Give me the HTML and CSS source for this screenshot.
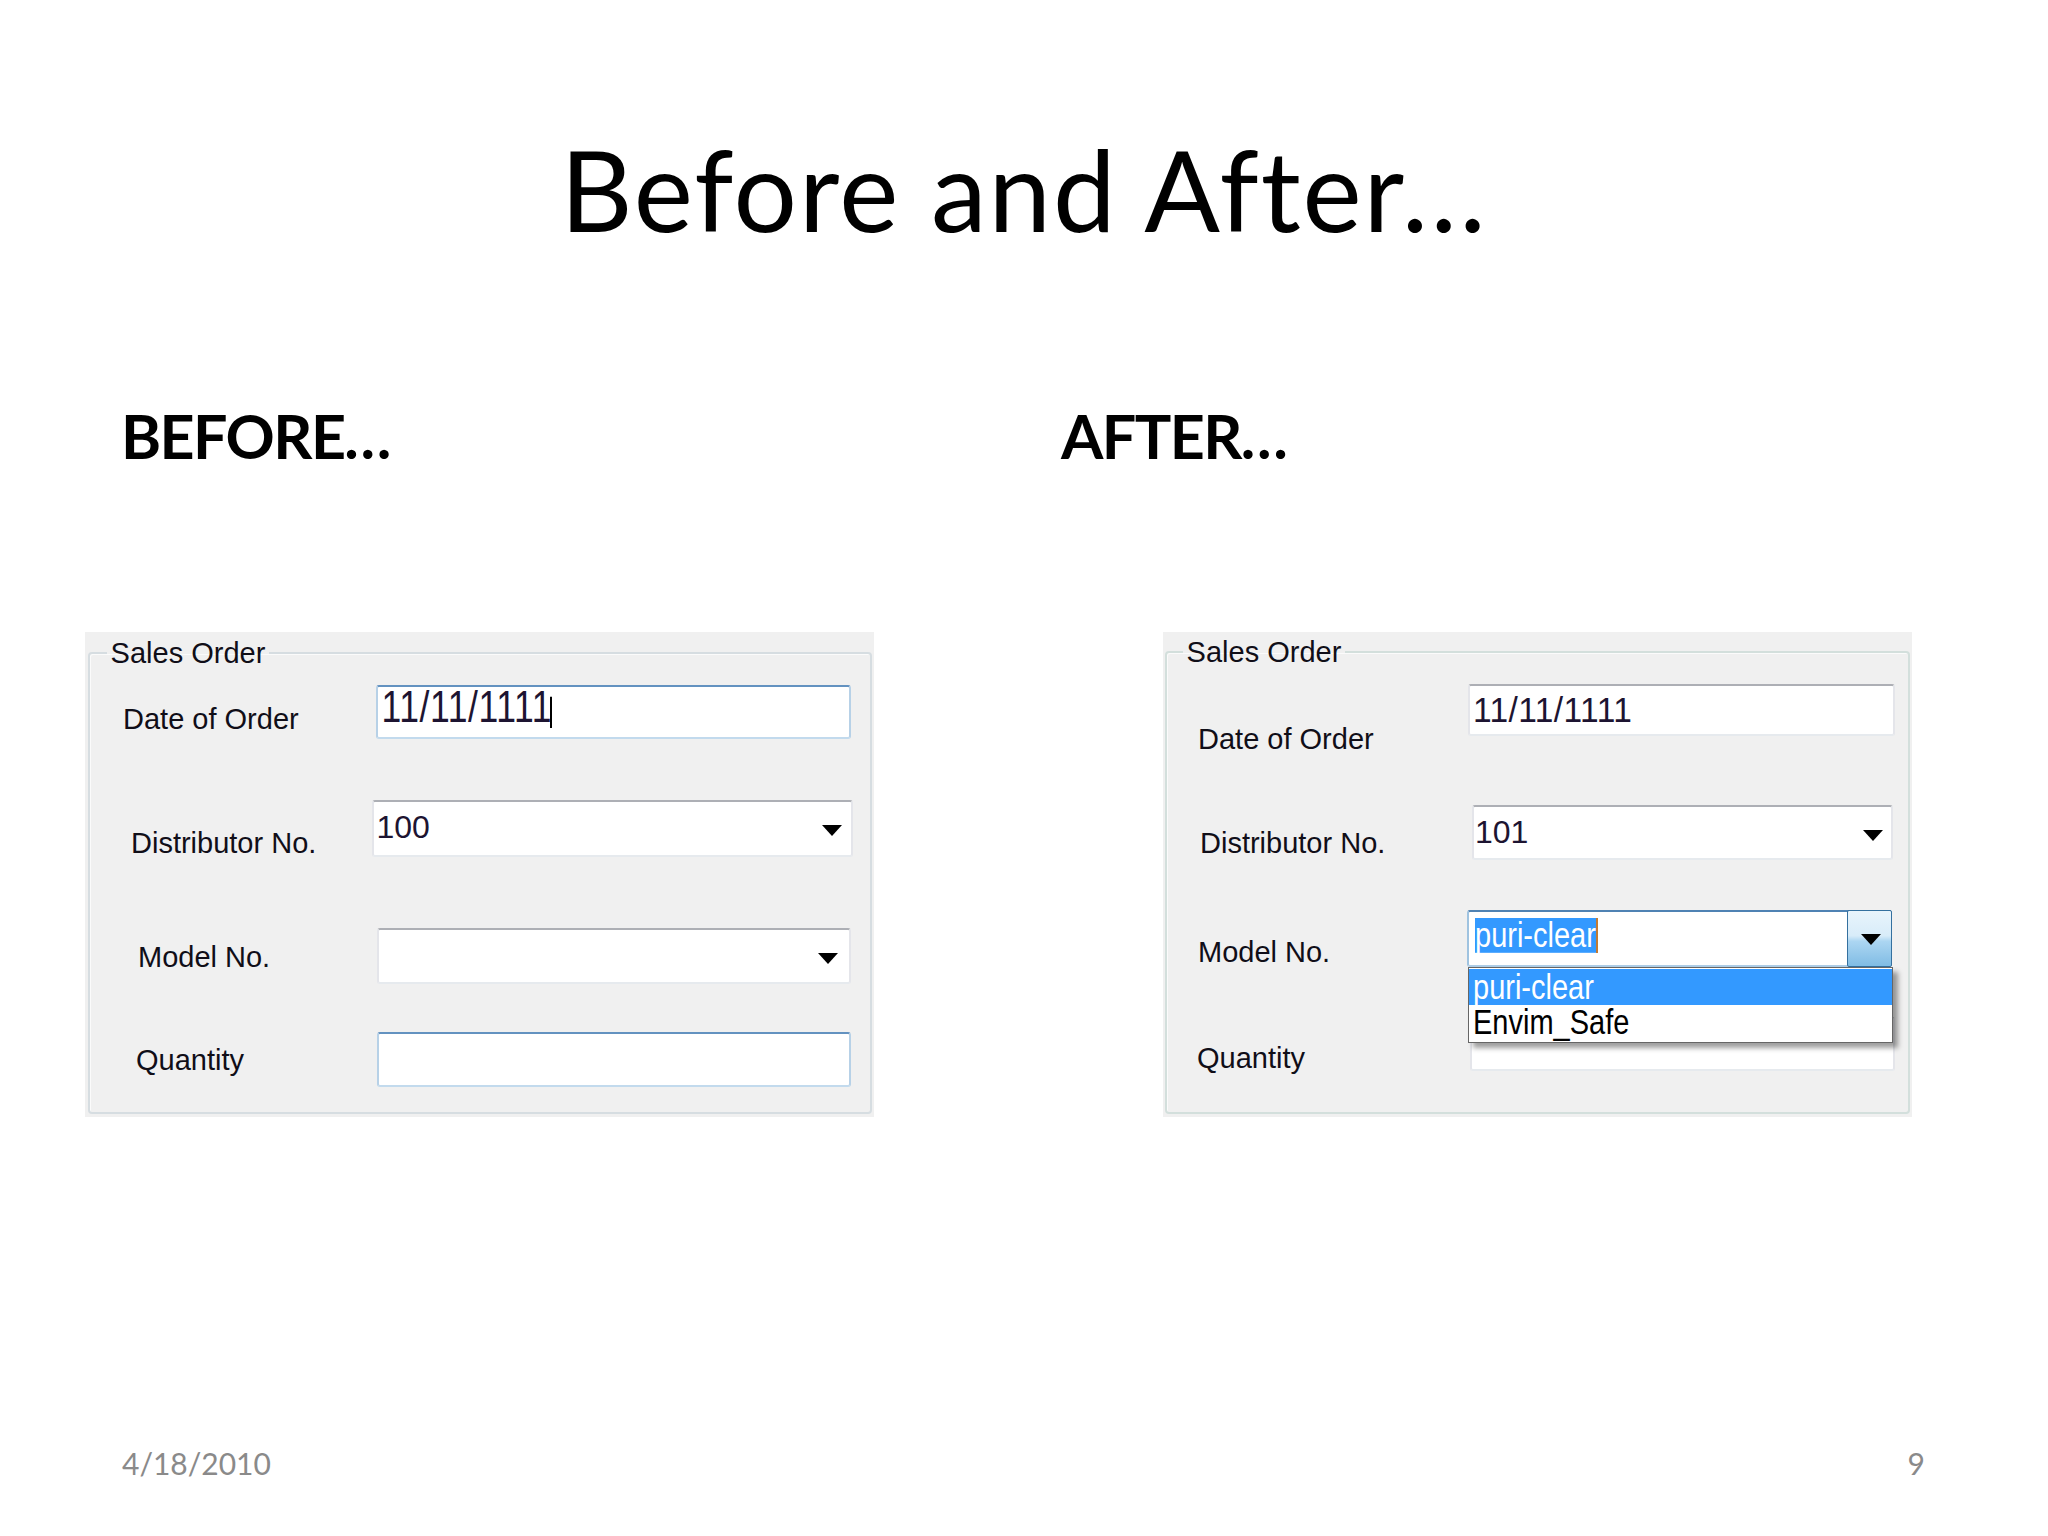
FILE: index.html
```html
<!DOCTYPE html>
<html lang="en">
<head>
<meta charset="utf-8">
<title>Before and After…</title>
<link rel="stylesheet" href="styles.css">
</head>
<body>
<div class="slide">
  <h1 class="title">Before and After…</h1>
  <div class="heads">
    <h2 class="head head-before">BEFORE…</h2>
    <h2 class="head head-after">AFTER…</h2>
  </div>
  <div class="panels">
    <div class="panel panel-before">
      <fieldset class="group">
        <legend class="legend">Sales Order</legend>
        <div class="rows">
          <div class="row b1">
            <span class="lbl">Date of Order</span>
            <div class="field tb-blue"><span class="val">11/11/1111<span class="caret"></span></span></div>
          </div>
          <div class="row b2">
            <span class="lbl">Distributor No.</span>
            <div class="field tb-gray"><span class="val">100</span>
              <svg class="arrow" viewBox="0 0 20 11"><polygon points="0,0 20,0 10,11" fill="#000"/></svg>
            </div>
          </div>
          <div class="row b3">
            <span class="lbl">Model No.</span>
            <div class="field tb-gray">
              <svg class="arrow" viewBox="0 0 20 11"><polygon points="0,0 20,0 10,11" fill="#000"/></svg>
            </div>
          </div>
          <div class="row b4">
            <span class="lbl">Quantity</span>
            <div class="field tb-blue"></div>
          </div>
        </div>
      </fieldset>
    </div>
    <div class="panel panel-after">
      <fieldset class="group">
        <legend class="legend">Sales Order</legend>
        <div class="rows">
          <div class="row a1">
            <span class="lbl">Date of Order</span>
            <div class="field tb-gray"><span class="val">11/11/1111</span></div>
          </div>
          <div class="row a2">
            <span class="lbl">Distributor No.</span>
            <div class="field tb-gray"><span class="val">101</span>
              <svg class="arrow" viewBox="0 0 20 11"><polygon points="0,0 20,0 10,11" fill="#000"/></svg>
            </div>
          </div>
          <div class="row a3">
            <span class="lbl">Model No.</span>
            <div class="field tb-active">
              <span class="sel">puri-clear</span><span class="caret2"></span>
              <div class="ddbtn">
                <svg class="arrow-btn" viewBox="0 0 20 11"><polygon points="0,0 20,0 10,11" fill="#000"/></svg>
              </div>
              <div class="list">
                <div class="item item1 hl"><span>puri-clear</span></div>
                <div class="item item2"><span>Envim_Safe</span></div>
              </div>
            </div>
          </div>
          <div class="row a4">
            <span class="lbl">Quantity</span>
            <div class="field tb-gray"></div>
          </div>
        </div>
      </fieldset>
    </div>
  </div>
  <div class="footer">
    <span class="date">4/18/2010</span>
    <span class="num">9</span>
  </div>
</div>
</body>
</html>
```

FILE: styles.css
```css
html, body {
  margin: 0;
  padding: 0;
  background: #fff;
}

.slide {
  width: 2048px;
  height: 1536px;
  display: flex;
  flex-direction: column;
  background: #fff;
  font-family: Lato, "Open Sans", sans-serif;
  color: #000;
  overflow: hidden;
}

.title {
  margin: 133px 0 0;
  font-size: 112px;
  font-weight: 400;
  line-height: 1;
  letter-spacing: 1.9px;
  text-align: center;
}

.heads {
  display: flex;
  margin-top: 160px;
  height: 61px;
  padding-left: 121px;
}

.head {
  margin: 0;
  font-size: 61px;
  font-weight: 700;
  line-height: 1;
  letter-spacing: -1.6px;
  white-space: nowrap;
}

.head-before {
  width: 940px;
}

.panels {
  display: flex;
  margin-top: 166px;
  padding-left: 85px;
  gap: 289px;
}

.panel {
  height: 485px;
  background: #f0f0f0;
  display: flex;
  flex-direction: column;
  box-sizing: border-box;
}

.panel-before { width: 789px; }
.panel-after { width: 749px; }

.group {
  flex: 1;
  min-width: 0;
  margin: 6.5px 2px 3px 3px;
  padding: 0;
  border: 2px solid #d6dde1;
  border-radius: 4px;
  box-shadow: inset 1px 1px 0 #fbfbfb;
}

.panel-after .group {
  margin: 5.5px 2px 3px 2px;
  border-color: #d3dfdc;
}

.legend {
  font: 29px/1 "Liberation Sans", Arial, sans-serif;
  color: #100e18;
  padding: 0 4px;
  margin-left: 16.6px;
}

.panel-after .legend { margin-left: 15.6px; }

.rows {
  padding-top: 17.5px;
}

.row {
  display: grid;
  align-items: start;
}

.panel-before .row { grid-template-columns: 282px 1fr; }
.panel-after .row { grid-template-columns: 300px 1fr; }

.lbl {
  font: 29px/1 "Liberation Sans", Arial, sans-serif;
  color: #100e18;
  white-space: nowrap;
  justify-self: start;
}

.field {
  box-sizing: border-box;
  display: flex;
  align-items: flex-start;
  background: #fff;
  border: 2px solid;
  border-radius: 3px;
  position: relative;
  justify-self: start;
}

.tb-gray { border-color: #adafb5 #e4e5ea #e6eaee #e4e5ea; }
.tb-blue { border-color: #6392c0 #b7d1e7 #c2daed #b7d1e7; }
.tb-active { border-color: #4f82b3 #9fc3e0 #aecde6 #9fc3e0; }

/* before rows */
.b1 { height: 115px; }
.b1 .lbl { margin: 19.5px 0 0 33px; }
.b1 .field { margin-left: 4px; width: 475px; height: 54px; }

.b2 { height: 128px; }
.b2 .lbl { margin: 28.5px 0 0 41px; }
.b2 .field { margin-left: 0; width: 481px; height: 57px; }

.b3 { height: 104px; }
.b3 .lbl { margin: 14.5px 0 0 48px; }
.b3 .field { margin-left: 5px; width: 474px; height: 56px; }

.b4 .lbl { margin: 13.5px 0 0 46px; }
.b4 .field { margin-left: 5px; width: 474px; height: 55px; }

/* after rows */
.a1 { height: 121px; }
.a1 .lbl { margin: 40.5px 0 0 31px; }
.a1 .field { margin-left: 1px; width: 427px; height: 52px; }

.a2 { height: 105px; }
.a2 .lbl { margin: 23.5px 0 0 33px; }
.a2 .field { margin-left: 5px; width: 421px; height: 55px; }

.a3 { height: 107px; }
.a3 .lbl { margin: 27.5px 0 0 31px; }
.a3 .field { margin-left: 0; width: 425px; height: 57px; }

.a4 .lbl { margin: 26.5px 0 0 30px; }
.a4 .field { margin-left: 3px; width: 425px; height: 54px; }

/* values */
.val {
  display: inline-block;
  font-family: "Liberation Sans", Arial, sans-serif;
  line-height: 1;
  color: #1d1431;
  white-space: nowrap;
  transform-origin: 0 0.8465em;
}

.b1 .val { font-size: 35.5px; margin: 6px 0 0 3.5px; letter-spacing: 0.6px; transform: scaleY(1.25); }
.b2 .val { font-size: 32px; margin: 9px 0 0 2.5px; }
.a1 .val { font-size: 33.5px; margin: 7.5px 0 0 3px; letter-spacing: 0.4px; transform: scaleY(1.04); }
.a2 .val { font-size: 32px; margin: 9px 0 0 1px; }

.caret {
  display: inline-block;
  width: 2px;
  height: 25px;
  background: #000;
  margin-left: -2px;
  vertical-align: -5px;
}

.arrow {
  width: 20px;
  height: 11px;
  flex: none;
}

.b2 .arrow { margin: 23px 9px 0 auto; }
.b3 .arrow { margin: 23px 11px 0 auto; }
.a2 .arrow { margin: 23px 8px 0 auto; }

.sel {
  display: inline-block;
  font: 29px/1 "Liberation Sans", Arial, sans-serif;
  background: #3399ff;
  color: #fff;
  margin: 6px 0 0 6px;
  transform: scaleY(1.2);
  transform-origin: 0 0;
  white-space: nowrap;
}

.caret2 {
  display: inline-block;
  width: 2px;
  height: 35px;
  margin-top: 6px;
  background: #c27a34;
}

.ddbtn {
  flex: none;
  box-sizing: border-box;
  width: 45px;
  height: 57px;
  margin: -2px -2px -2px auto;
  border: 1px solid #34709f;
  border-radius: 2px;
  background: linear-gradient(#e8f4fc 0%, #d8ecf9 45%, #acd6f2 55%, #80bce4 100%);
  display: flex;
  align-items: center;
  justify-content: center;
}

.arrow-btn {
  width: 20px;
  height: 11px;
  margin-left: 2px;
  margin-top: 2px;
}

.list {
  position: absolute;
  left: -1px;
  top: 55px;
  width: 425px;
  box-sizing: border-box;
  border: 1px solid #666;
  padding: 1px 0;
  background: #fff;
  box-shadow: 5px 5px 5px rgba(0, 0, 0, 0.38);
  z-index: 2;
}

.item {
  height: 36px;
  padding-left: 4px;
  color: #000;
}

.item span {
  display: inline-block;
  font: 29px/1 "Liberation Sans", Arial, sans-serif;
  transform: scaleY(1.18);
  transform-origin: 0 0;
  white-space: nowrap;
}

.item.hl {
  background: #3399ff;
  color: #fff;
}

.item1 span { margin-top: 2px; }
.item2 span { margin-top: 1px; }

.footer {
  display: flex;
  justify-content: space-between;
  margin-top: 330.5px;
  padding: 0 123px 0 122px;
  font-size: 30px;
  line-height: 1;
  color: #8a8a8a;
}
```
